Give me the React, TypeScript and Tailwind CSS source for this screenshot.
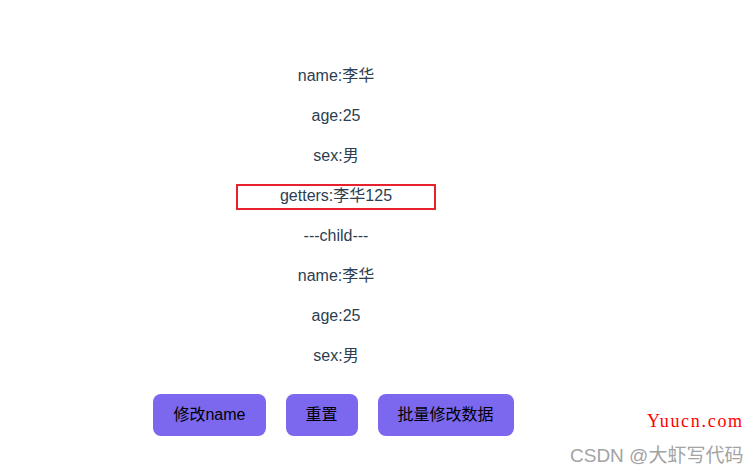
import React, { useState } from 'react';

const App: React.FC = () => {
  const [name, setName] = useState<string>('李华');
  const [age, setAge] = useState<number>(25);
  const [sex, setSex] = useState<string>('男');

  const rowCls = 'h-[24px] leading-[24px]';

  return (
    <div
      className="relative w-[756px] h-[476px] bg-white overflow-hidden text-[16px] text-[#2c3e50]"
      style={{ fontFamily: '"Liberation Sans", "Noto Sans CJK SC", sans-serif' }}
    >
      <div className="w-[672px] pt-[64px] flex flex-col items-center gap-[16px] text-center">
        <div className={rowCls}>name:{name}</div>
        <div className={rowCls}>age:{age}</div>
        <div className={rowCls}>sex:{sex}</div>
        <div className="w-[200px] h-[26px] mt-[0px] mb-[-2px] border-2 border-[#e8212e] leading-[20px]">
          getters:{name}1{age}
        </div>
        <div className={rowCls}>---child---</div>
        <div className={rowCls}>name:{name}</div>
        <div className={rowCls}>age:{age}</div>
        <div className={rowCls}>sex:{sex}</div>
      </div>

      <div className="w-[667px] mt-[26px] flex justify-center gap-[20px]">
        <button
          className="h-[42px] px-[20px] rounded-[8px] bg-[#7b68ee] text-black"
          onClick={() => setName('张三')}
        >
          修改name
        </button>
        <button
          className="h-[42px] px-[20px] rounded-[8px] bg-[#7b68ee] text-black"
          onClick={() => {
            setName('李华');
            setAge(25);
            setSex('男');
          }}
        >
          重置
        </button>
        <button
          className="h-[42px] px-[20px] rounded-[8px] bg-[#7b68ee] text-black"
          onClick={() => {
            setName('王五');
            setAge(30);
            setSex('女');
          }}
        >
          批量修改数据
        </button>
      </div>

      {/* watermarks */}
      <div
        className="absolute left-[647px] top-[410px] text-[18px] leading-[22px] tracking-[1.7px] text-[#ff0000]"
        style={{ fontFamily: '"Liberation Serif", serif' }}
      >
        Yuucn.com
      </div>
      <div className="absolute left-[570px] top-[444px] text-[19px] leading-[24px] text-[#a3a3a3] whitespace-nowrap">
        CSDN @大虾写代码
      </div>
    </div>
  );
};

export default App;
